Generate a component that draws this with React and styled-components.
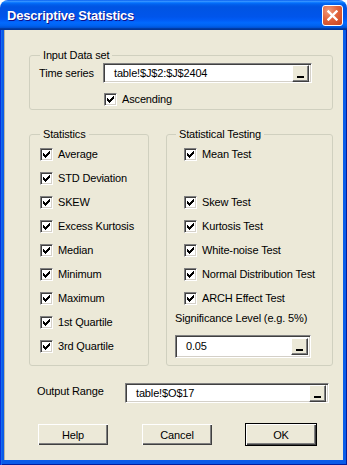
import React from 'react';
import styled, { createGlobalStyle } from 'styled-components';

const GlobalStyle = createGlobalStyle`
  html, body {
    margin: 0;
    padding: 0;
    background: #ffffff;
  }
  body {
    font-family: 'Liberation Sans', Arial, sans-serif;
    font-size: 11px;
    letter-spacing: -0.15px;
    color: #000;
  }
`;

const Window = styled.div`
  width: 347px;
  height: 465px;
  display: flex;
  flex-direction: column;
  border-radius: 8px 8px 0 0;
  overflow: hidden;
`;

const TitleBar = styled.div`
  height: 30px;
  flex: 0 0 30px;
  display: flex;
  align-items: center;
  justify-content: space-between;
  padding: 0 4px 0 7px;
  box-sizing: border-box;
  background: linear-gradient(to bottom, #0058ee 0%, #3a93ff 4%, #288eff 6%, #127dff 8%, #036ffc 10%, #0262ee 14%, #0057e5 20%, #0054e3 24%, #0055eb 56%, #005bf5 66%, #026afe 76%, #0062ef 86%, #0052d6 92%, #0040ab 94%, #003092 100%);
`;

const Title = styled.span`
  font-family: 'Liberation Sans', Arial, sans-serif;
  font-weight: bold;
  font-size: 13px;
  color: #fff;
  text-shadow: 1px 1px #0f1089;
  letter-spacing: -0.2px;
`;

const CloseButton = styled.div`
  width: 21px;
  height: 21px;
  box-sizing: border-box;
  border: 1px solid #fff;
  border-radius: 3px;
  background: radial-gradient(circle at 30% 25%, #f09b7c 0%, #e2643c 45%, #c9431f 100%);
  display: flex;
  align-items: center;
  justify-content: center;
`;

const Frame = styled.div`
  flex: 1;
  display: flex;
  padding: 0 4px 5px 4px;
  background: #0a5ce8;
  box-shadow: inset 1px 0 #0831d9, inset 2px 0 #166aee, inset -1px 0 #001ea0, inset 0 -1px #001ea0;
`;

const Body = styled.div`
  flex: 1;
  display: flex;
  flex-direction: column;
  background: #ece9d8;
  padding: 19px 10px 0 25px;
  box-shadow: inset 1px 0 #b8b5a6;
`;

const GroupBox = styled.fieldset`
  margin: 0;
  min-width: 0;
  width: ${p => p.$width}px;
  box-sizing: border-box;
  padding: ${p => p.$pad};
  border: 1px solid #d0d0bf;
  border-radius: 3px;
  display: flex;
  flex-direction: column;
`;

const Legend = styled.legend`
  padding: 0 3px;
  margin-left: 1px;
  line-height: 13px;
  font-size: 11px;
`;

const FieldRow = styled.div`
  display: flex;
  align-items: ${p => (p.$top ? 'flex-start' : 'center')};
  margin-top: ${p => p.$mt || 0}px;
  padding-left: ${p => p.$pl || 0}px;
`;

const Label = styled.span`
  width: ${p => p.$width}px;
  flex: 0 0 auto;
  line-height: 13px;
  margin-top: ${p => p.$mt || 0}px;
`;

const EditBox = styled.div`
  width: ${p => p.$width}px;
  height: ${p => p.$height}px;
  box-sizing: border-box;
  display: flex;
  align-items: center;
  background: #fff;
  border-top: 1px solid #808080;
  border-left: 1px solid #808080;
  border-bottom: 1px solid #fff;
  border-right: 1px solid #fff;
  box-shadow: inset 1px 1px #404040, inset -1px -1px #d4d0c8;
  padding: 0 2px 0 10px;
`;

const EditText = styled.span`
  flex: 1;
  line-height: 13px;
`;

const DropButton = styled.div`
  width: 17px;
  height: 17px;
  box-sizing: border-box;
  background: #ece9d8;
  border-top: 1px solid #fff;
  border-left: 1px solid #fff;
  border-right: 1px solid #404040;
  border-bottom: 1px solid #404040;
  box-shadow: inset -1px -1px #808080;
  display: flex;
  align-items: flex-end;
  justify-content: center;
  padding-bottom: 3px;
`;

const Bar = styled.div`
  width: 7px;
  height: 2px;
  background: #000;
`;

const CheckList = styled.div`
  display: flex;
  flex-direction: column;
  gap: 11px;
  padding-left: ${p => p.$indent || 0}px;
`;

const CheckRow = styled.label`
  display: flex;
  align-items: center;
  height: 13px;
  gap: 5px;
  line-height: 13px;
  margin-top: ${p => p.$mt || 0}px;
  margin-left: ${p => p.$ml || 0}px;
`;

const Spacer = styled.div`
  height: 13px;
`;

const Box = styled.span`
  width: 13px;
  height: 13px;
  flex: 0 0 13px;
  box-sizing: border-box;
  background: #fff;
  border-top: 1px solid #808080;
  border-left: 1px solid #808080;
  border-bottom: 1px solid #fff;
  border-right: 1px solid #fff;
  box-shadow: inset 1px 1px #404040, inset -1px -1px #d4d0c8;
  display: flex;
  align-items: center;
  justify-content: center;
`;

const Columns = styled.div`
  display: flex;
  gap: 17px;
  margin-top: 18px;
`;

const Note = styled.div`
  line-height: 13px;
  margin-top: 7px;
  margin-bottom: 10px;
`;

const ButtonRow = styled.div`
  display: flex;
  gap: 32px;
  margin-top: 20px;
  padding-left: 8px;
`;

const Button = styled.div`
  width: 72px;
  height: 23px;
  box-sizing: border-box;
  display: flex;
  align-items: center;
  justify-content: center;
  background: #ece9d8;
  border: 1px solid ${p => (p.$default ? '#000' : 'transparent')};
  box-shadow: inset 1px 1px #fff, inset -1px -1px #404040, inset -2px -2px #808080;
`;

function Check({ children, ml, mt }) {
  return (
    <CheckRow $ml={ml} $mt={mt}>
      <Box>
        <svg width="9" height="9" viewBox="0 0 9 9" shapeRendering="crispEdges">
          <path
            fill="#000"
            d="M7 1h1v1h-1z M6 2h2v1h-2z M1 3h1v1h-1z M5 3h3v1h-3z M1 4h2v1h-2z M4 4h3v1h-3z M1 5h5v1h-5z M2 6h3v1h-3z M3 7h1v1h-1z"
          />
        </svg>
      </Box>
      <span>{children}</span>
    </CheckRow>
  );
}

function RefEdit({ value, width, height }) {
  return (
    <EditBox $width={width} $height={height}>
      <EditText>{value}</EditText>
      <DropButton>
        <Bar />
      </DropButton>
    </EditBox>
  );
}

const statistics = ['Average', 'STD Deviation', 'SKEW', 'Excess Kurtosis', 'Median', 'Minimum', 'Maximum', '1st Quartile', '3rd Quartile'];
const tests = ['Skew Test', 'Kurtosis Test', 'White-noise Test', 'Normal Distribution Test', 'ARCH Effect Test'];

export default function App() {
  return (
    <Window>
      <GlobalStyle />
      <TitleBar>
        <Title>Descriptive Statistics</Title>
        <CloseButton>
          <svg width="11" height="11" viewBox="0 0 11 11">
            <path d="M1.5 1.5L9.5 9.5M9.5 1.5L1.5 9.5" stroke="#fff" strokeWidth="2.4" strokeLinecap="square" />
          </svg>
        </CloseButton>
      </TitleBar>
      <Frame>
        <Body>
          <GroupBox $width={304} $pad="1px 9px 3px 9px">
            <Legend>Input Data set</Legend>
            <FieldRow>
              <Label $width={64}>Time series</Label>
              <RefEdit value="table!$J$2:$J$2404" width={209} height={20} />
            </FieldRow>
            <Check ml={65} mt={10}>Ascending</Check>
          </GroupBox>

          <Columns>
            <GroupBox $width={120} $pad="7px 9px 12px 9px">
              <Legend>Statistics</Legend>
              <CheckList $indent={1}>
                {statistics.map(s => (
                  <Check key={s}>{s}</Check>
                ))}
              </CheckList>
            </GroupBox>
            <GroupBox $width={167} $pad="7px 8px 7px 8px">
              <Legend>Statistical Testing</Legend>
              <CheckList $indent={9}>
                <Check>Mean Test</Check>
                <Spacer />
                {tests.map(t => (
                  <Check key={t}>{t}</Check>
                ))}
              </CheckList>
              <Note>Significance Level (e.g. 5%)</Note>
              <RefEdit value="0.05" width={136} height={23} />
            </GroupBox>
          </Columns>

          <FieldRow $top $mt={17} $pl={8}>
            <Label $width={88} $mt={2}>Output Range</Label>
            <RefEdit value="table!$O$17" width={204} height={20} />
          </FieldRow>

          <ButtonRow>
            <Button>Help</Button>
            <Button>Cancel</Button>
            <Button $default>OK</Button>
          </ButtonRow>
        </Body>
      </Frame>
    </Window>
  );
}
